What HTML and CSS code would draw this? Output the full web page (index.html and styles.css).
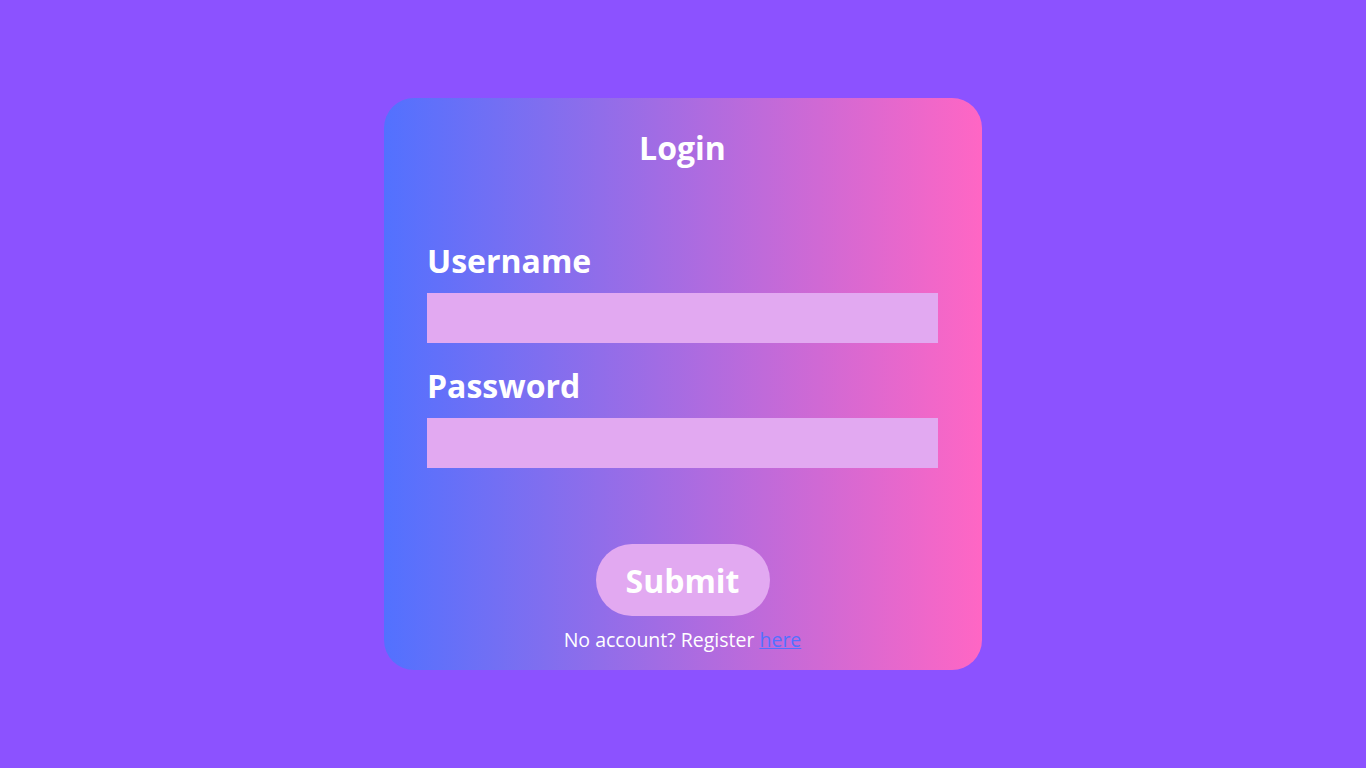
FILE: index.html
```html
<!DOCTYPE html>
<html lang="en">
<head>
<meta charset="utf-8">
<title>Login</title>
<link rel="stylesheet" href="styles.css">
</head>
<body>
<form class="card">
  <h1 class="title">Login</h1>
  <label class="label label-first" for="u">Username</label>
  <input class="field" id="u" type="text">
  <label class="label label-second" for="p">Password</label>
  <input class="field" id="p" type="password">
  <button class="submit" type="button">Submit</button>
  <p class="footer">No account? Register <a href="#" class="link">here</a></p>
</form>
</body>
</html>
```

FILE: styles.css
```css
html, body {
  margin: 0;
  padding: 0;
}
body {
  background: #8c52ff;
  height: 768px;
  display: flex;
  justify-content: center;
  align-items: center;
  font-family: "Open Sans", "Noto Sans", sans-serif;
  color: #ffffff;
}
.card {
  width: 598px;
  height: 572px;
  box-sizing: border-box;
  border-radius: 30px;
  background: linear-gradient(to right, #5271ff, #ff66c4);
  padding: 30px 44px 0 43px;
  display: flex;
  flex-direction: column;
}
.title {
  margin: 0;
  font-size: 32px;
  line-height: 40px;
  font-weight: 700;
  text-align: center;
}
.label {
  display: block;
  font-size: 32px;
  line-height: 40px;
  font-weight: 700;
}
.label-first {
  margin-top: 73px;
}
.label-second {
  margin-top: 23px;
}
.field {
  display: block;
  margin: 12px 0 0;
  height: 50px;
  width: 100%;
  box-sizing: border-box;
  border: none;
  background: #e2a9f1;
  outline: none;
}
.submit {
  align-self: center;
  margin-top: 76px;
  width: 174px;
  height: 72px;
  border: none;
  border-radius: 36px;
  background: #e2a9f1;
  color: #ffffff;
  font-family: "Open Sans", "Noto Sans", sans-serif;
  font-size: 32px;
  font-weight: 700;
  padding: 0;
}
.footer {
  margin: 12px 0 0;
  font-size: 19.5px;
  line-height: 24px;
  text-align: center;
}
.link {
  color: #5271ff;
}
```
